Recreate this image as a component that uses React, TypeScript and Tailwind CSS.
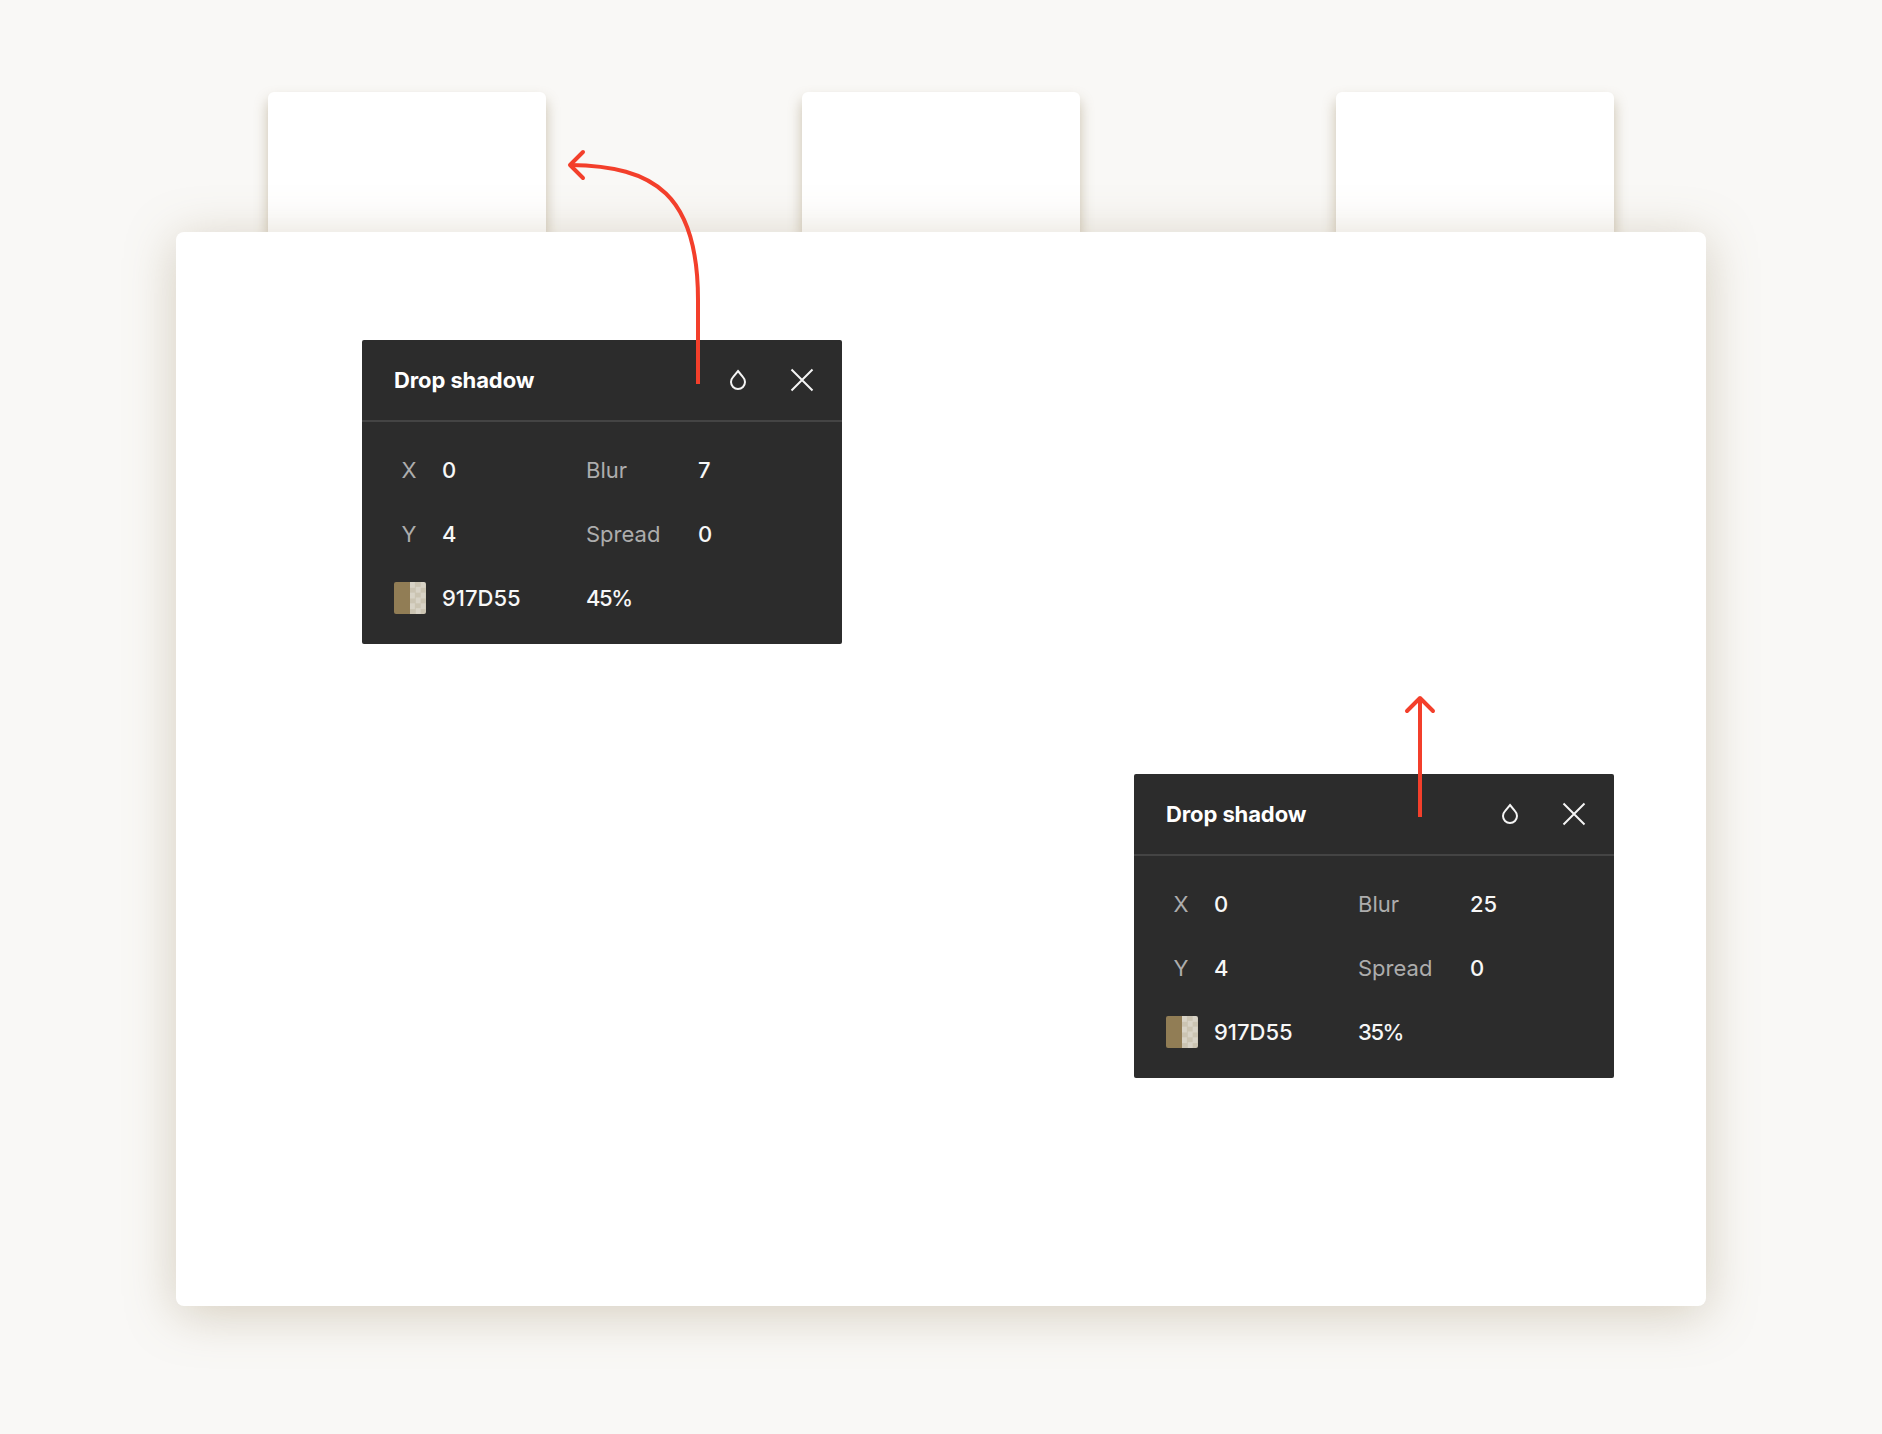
function DropIcon() {
  return (
    <svg width="18" height="22" viewBox="0 0 18 22" fill="none">
      <path d="M9 2 L14 8.1 A7 7 0 1 1 4 8.1 Z" stroke="#f5f5f5" strokeWidth="2" />
    </svg>
  );
}

function CloseIcon() {
  return (
    <svg width="24" height="24" viewBox="0 0 24 24" fill="none">
      <path d="M1.5 1.5 L22.5 22.5 M22.5 1.5 L1.5 22.5" stroke="#f5f5f5" strokeWidth="2" />
    </svg>
  );
}

function Swatch() {
  return (
    <div className="flex h-8 w-8 overflow-hidden rounded-[2px]">
      <div className="h-full w-4 bg-[#917d55]" />
      <div className="h-full w-4 bg-[repeating-conic-gradient(#cbc4b2_0_25%,#d8d3c6_0_50%)] bg-[length:10.67px_10.67px]" />
    </div>
  );
}

interface PanelProps {
  blur: string;
  opacity: string;
  className?: string;
}

function ShadowPanel({ blur, opacity, className }: PanelProps) {
  const label = "font-normal text-[#adadad]";
  return (
    <div className={`w-[480px] rounded-[2px] bg-[#2c2c2c] text-[22px] font-medium leading-8 text-[#f7f7f7] ${className ?? ""}`}>
      {/* Header */}
      <div className="flex h-[82px] items-center border-b-2 border-[#444444] pl-8 pr-4">
        <span className="font-bold tracking-[-0.1px] text-white">Drop shadow</span>
        <div className="ml-auto flex gap-4">
          <div className="flex h-12 w-12 items-center justify-center">
            <DropIcon />
          </div>
          <div className="flex h-12 w-12 items-center justify-center">
            <CloseIcon />
          </div>
        </div>
      </div>

      {/* Fields */}
      <div className="grid grid-cols-[48px_144px_112px_1fr] auto-rows-[64px] items-center pb-[14px] pl-8 pt-4">
        <span className={`w-[30px] text-center ${label}`}>X</span>
        <span>0</span>
        <span className={label}>Blur</span>
        <span>{blur}</span>

        <span className={`w-[30px] text-center ${label}`}>Y</span>
        <span>4</span>
        <span className={label}>Spread</span>
        <span>0</span>

        <Swatch />
        <span>917D55</span>
        <span className="tracking-[-1.4px]">{opacity}</span>
        <span />
      </div>
    </div>
  );
}

export default function App() {
  const smallCard =
    "h-[140px] w-[278px] rounded-t-[6px] bg-white shadow-[0_8px_14px_0_rgba(145,125,85,0.45)]";

  return (
    <div
      className="relative h-[1434px] overflow-hidden bg-[#f9f8f6] pt-[92px] pl-[176px]"
      style={{ fontFamily: '"Inter", "Liberation Sans", sans-serif' }}
    >
      {/* Cards peeking out from behind */}
      <div className="flex gap-[256px] pl-[92px]">
        <div className={smallCard} />
        <div className={smallCard} />
        <div className={smallCard} />
      </div>

      {/* Main card */}
      <div className="relative flex h-[1074px] w-[1530px] flex-col gap-[130px] rounded-lg bg-white pl-[186px] pr-[92px] pt-[108px] shadow-[0_8px_50px_0_rgba(145,125,85,0.35)]">
        <ShadowPanel blur="7" opacity="45%" />
        <ShadowPanel blur="25" opacity="35%" className="self-end" />
      </div>

      {/* Annotation arrows */}
      <svg className="absolute left-0 top-0" width="1882" height="1434" fill="none">
        <g stroke="#f33f2b" strokeWidth="4" strokeLinejoin="round">
          <path d="M698 384 V300 C698 195 655 166 570 165" />
          <path d="M583 152 L570 165 L583 178" strokeLinecap="round" />
          <path d="M1420 817 V699" />
          <path d="M1407 711 L1420 698 L1433 711" strokeLinecap="round" />
        </g>
      </svg>
    </div>
  );
}
